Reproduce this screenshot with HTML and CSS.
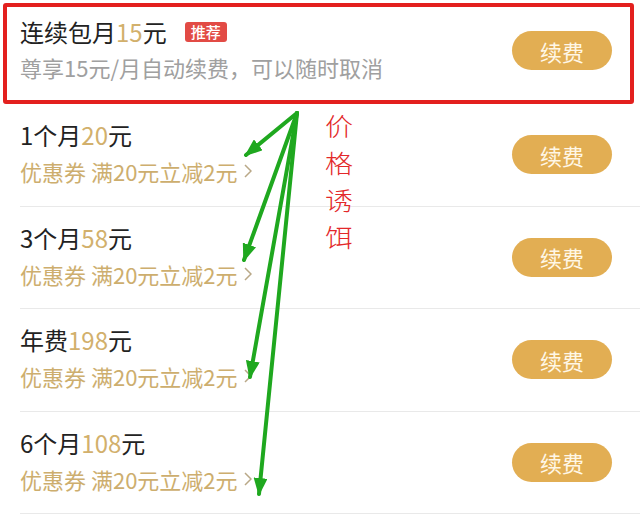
FILE: index.html
```html
<!DOCTYPE html>
<html lang="zh-CN">
<head>
	<meta charset="UTF-8">
	<meta name="viewport" content="width=device-width, initial-scale=1.0">
	<title>续费</title>
	<link rel="stylesheet" href="styles.css">
</head>
<body>

<div class="page">

	<div class="plan plan-hot">
		<div class="plan-info">
			<div class="plan-title">连续包月<span class="price">15</span>元 <span class="badge">推荐</span></div>
			<div class="plan-sub">尊享15元/月自动续费，可以随时取消</div>
		</div>
		<button class="renew">续费</button>
	</div>

	<div class="plan">
		<div class="plan-info">
			<div class="plan-title">1个月<span class="price">20</span>元</div>
			<div class="coupon">优惠券 满20元立减2元 <svg class="chev" width="8" height="14" viewBox="0 0 8 14"><path d="M1 1 L7 7 L1 13" /></svg></div>
		</div>
		<button class="renew">续费</button>
	</div>

	<div class="plan">
		<div class="plan-info">
			<div class="plan-title">3个月<span class="price">58</span>元</div>
			<div class="coupon">优惠券 满20元立减2元 <svg class="chev" width="8" height="14" viewBox="0 0 8 14"><path d="M1 1 L7 7 L1 13" /></svg></div>
		</div>
		<button class="renew">续费</button>
	</div>

	<div class="plan">
		<div class="plan-info">
			<div class="plan-title">年费<span class="price">198</span>元</div>
			<div class="coupon">优惠券 满20元立减2元 <svg class="chev" width="8" height="14" viewBox="0 0 8 14"><path d="M1 1 L7 7 L1 13" /></svg></div>
		</div>
		<button class="renew">续费</button>
	</div>

	<div class="plan">
		<div class="plan-info">
			<div class="plan-title">6个月<span class="price">108</span>元</div>
			<div class="coupon">优惠券 满20元立减2元 <svg class="chev" width="8" height="14" viewBox="0 0 8 14"><path d="M1 1 L7 7 L1 13" /></svg></div>
		</div>
		<button class="renew">续费</button>
	</div>

	<!-- annotation drawn over the list -->
	<svg class="arrows" width="640" height="519" viewBox="0 0 640 519">
		<defs>
			<marker id="head" markerUnits="userSpaceOnUse" markerWidth="18" markerHeight="14" refX="16" refY="7" orient="auto">
				<path d="M0 0 L18 7 L0 14 Z" fill="#1fa81f" />
			</marker>
		</defs>
		<g stroke="#1fa81f" stroke-width="4" stroke-linecap="round" fill="none">
			<line x1="297" y1="113" x2="246" y2="155" marker-end="url(#head)" />
			<line x1="297" y1="113" x2="244" y2="260" marker-end="url(#head)" />
			<line x1="297" y1="113" x2="250" y2="377" marker-end="url(#head)" />
			<line x1="297" y1="113" x2="259" y2="494" marker-end="url(#head)" />
		</g>
	</svg>
	<div class="note">
		<div>价</div>
		<div>格</div>
		<div>诱</div>
		<div>饵</div>
	</div>

</div>

</body>
</html>
```

FILE: styles.css
```css
body {
	margin: 0;
	background: white;
	font-family: "Noto Sans CJK SC", "Noto Sans", sans-serif;
	color: #222;
}

.page {
	position: relative;
	width: 640px;
	height: 519px;
	overflow: hidden;
}

.plan {
	display: flex;
	align-items: center;
	justify-content: space-between;
	box-sizing: border-box;
	height: 102.5px;
	margin-left: 20px;
	padding-right: 28px;
	border-bottom: 1px solid #e9e9e9;
}

.plan-hot {
	height: 101px;
	margin: 3px 6px 0 3px;
	padding: 0 18px 0 13px;
	border: 4px solid #e3201e;
	border-radius: 3px;
}

.plan-hot .plan-info {
	padding-top: 8px;
}

.plan-hot .renew {
	margin-bottom: 6px;
}

.plan-info {
	align-self: flex-start;
	padding-top: 14px;
}

.plan-title {
	font-size: 24px;
	line-height: 34px;
	display: flex;
	align-items: center;
}

.price {
	color: #d2b06c;
}

.badge {
	display: inline-block;
	margin-left: 18px;
	padding: 0 6px;
	height: 20px;
	line-height: 20px;
	font-size: 15px;
	font-weight: 500;
	color: white;
	background: #e24b45;
	border-radius: 3px;
}

.plan-sub {
	font-size: 22px;
	line-height: 34px;
	margin-top: 1px;
	color: #a0a0a0;
}

.coupon {
	font-size: 22px;
	line-height: 34px;
	margin-top: 2px;
	color: #cdae6e;
	display: flex;
	align-items: center;
}

.chev {
	margin-left: 6px;
}

.chev path {
	fill: none;
	stroke: #b9a887;
	stroke-width: 1.5;
}

.renew {
	width: 100px;
	height: 39px;
	border: none;
	border-radius: 20px;
	background: #e2ae53;
	color: #fff7e6;
	font-family: inherit;
	font-size: 22px;
	padding: 0;
}

.arrows {
	position: absolute;
	left: 0;
	top: 0;
	pointer-events: none;
}

.note {
	position: absolute;
	left: 325px;
	top: 107px;
	font-size: 25px;
	line-height: 37px;
	font-weight: 300;
	color: #e3282a;
	transform: scaleX(1.12);
	transform-origin: left top;
}
```
